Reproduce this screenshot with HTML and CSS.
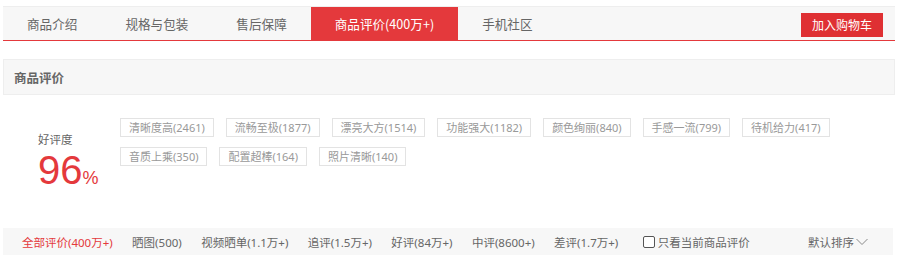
FILE: index.html
```html
<!DOCTYPE html>
<html lang="zh-CN">
<head>
<meta charset="utf-8">
<title>商品评价</title>
<link rel="stylesheet" href="styles.css">
</head>
<body>
<div class="page">
  <div class="tabbar">
    <a class="tab">商品介绍</a>
    <a class="tab">规格与包装</a>
    <a class="tab">售后保障</a>
    <a class="tab active">商品评价(400万+)</a>
    <a class="tab">手机社区</a>
    <a class="cart-btn">加入购物车</a>
  </div>

  <div class="section-head">商品评价</div>

  <div class="rate">
    <div class="rate-score">
      <div class="rate-label">好评度</div>
      <div class="rate-num">96<span class="rate-pct">%</span></div>
    </div>
    <div class="tags">
      <span class="tag">清晰度高(2461)</span>
      <span class="tag">流畅至极(1877)</span>
      <span class="tag">漂亮大方(1514)</span>
      <span class="tag">功能强大(1182)</span>
      <span class="tag">颜色绚丽(840)</span>
      <span class="tag">手感一流(799)</span>
      <span class="tag">待机给力(417)</span>
      <span class="tag">音质上乘(350)</span>
      <span class="tag">配置超棒(164)</span>
      <span class="tag">照片清晰(140)</span>
    </div>
  </div>

  <div class="filter">
    <a class="f-item active">全部评价(400万+)</a>
    <a class="f-item">晒图(500)</a>
    <a class="f-item">视频晒单(1.1万+)</a>
    <a class="f-item">追评(1.5万+)</a>
    <a class="f-item">好评(84万+)</a>
    <a class="f-item">中评(8600+)</a>
    <a class="f-item">差评(1.7万+)</a>
    <label class="f-check"><span class="box"></span>只看当前商品评价</label>
    <a class="f-sort">默认排序<svg class="chev" width="12" height="8" viewBox="0 0 12 8"><path d="M0.5 1 L6 6.5 L11.5 1" fill="none" stroke="#888" stroke-width="1"/></svg></a>
  </div>
</div>
</body>
</html>
```

FILE: styles.css
```css
* { box-sizing: border-box; }
body {
  margin: 0;
  background: #fff;
  font-family: "Noto Sans", "Noto Sans CJK SC", sans-serif;
  color: #666;
}
.page {
  width: 895px;
  padding: 6px 0 0 3px;
}
.tabbar {
  display: flex;
  align-items: center;
  height: 35px;
  background: #f7f7f7;
  border-top: 1px solid #eee;
  border-bottom: 1px solid #e4393c;
}
.tab {
  padding: 0 24px;
  height: 34px;
  line-height: 34px;
  font-size: 12.6px;
  color: #666;
  font-family: "Noto Sans CJK SC", sans-serif;
}
.tab.active {
  background: #e4393c;
  color: #fff;
}
.cart-btn {
  margin-left: auto;
  margin-right: 12px;
  margin-top: 3px;
  width: 82px;
  height: 24px;
  line-height: 24px;
  text-align: center;
  background: #df3033;
  color: #fff;
  font-size: 12px;
  font-family: "Noto Sans CJK SC", sans-serif;
}
.section-head {
  margin-top: 18px;
  height: 36px;
  line-height: 36px;
  padding-left: 10px;
  background: #f7f7f7;
  border: 1px solid #eee;
  font-size: 12.5px;
  font-weight: bold;
  color: #666;
  font-family: "Noto Sans CJK SC", sans-serif;
}
.rate {
  display: flex;
  align-items: flex-start;
  margin-top: 23px;
}
.rate-score {
  width: 117px;
  padding-left: 35px;
  padding-top: 13px;
}
.rate-label {
  font-size: 11.5px;
  color: #666;
  line-height: 17px;
  font-family: "Noto Sans CJK SC", sans-serif;
}
.rate-num {
  font-family: "Liberation Sans", Arial, sans-serif;
  font-size: 40px;
  line-height: 45px;
  color: #e4393c;
}
.rate-pct {
  font-size: 18px;
}
.tags {
  display: flex;
  flex-wrap: wrap;
  align-content: flex-start;
  width: 760px;
  gap: 10px 12px;
}
.tag {
  height: 19px;
  line-height: 17px;
  padding: 0 8px;
  border: 1px solid #e3e3e3;
  font-size: 11px;
  color: #999;
}
.filter {
  display: flex;
  align-items: center;
  margin-top: 27px;
  height: 27px;
  width: 890px;
  padding-left: 19px;
  background: #f7f7f7;
  font-size: 11.5px;
  color: #666;
}
.f-item {
  margin-right: 19.4px;
}
.f-item.active {
  color: #e4393c;
}
.f-check {
  display: flex;
  align-items: center;
  margin-left: 5px;
}
.box {
  width: 12px;
  height: 12px;
  border: 1px solid #555;
  border-radius: 2px;
  margin-right: 3px;
  background: #fff;
}
.f-sort {
  display: flex;
  align-items: center;
  margin-left: auto;
  margin-right: 25px;
}
.chev {
  margin-left: 2px;
}
```
